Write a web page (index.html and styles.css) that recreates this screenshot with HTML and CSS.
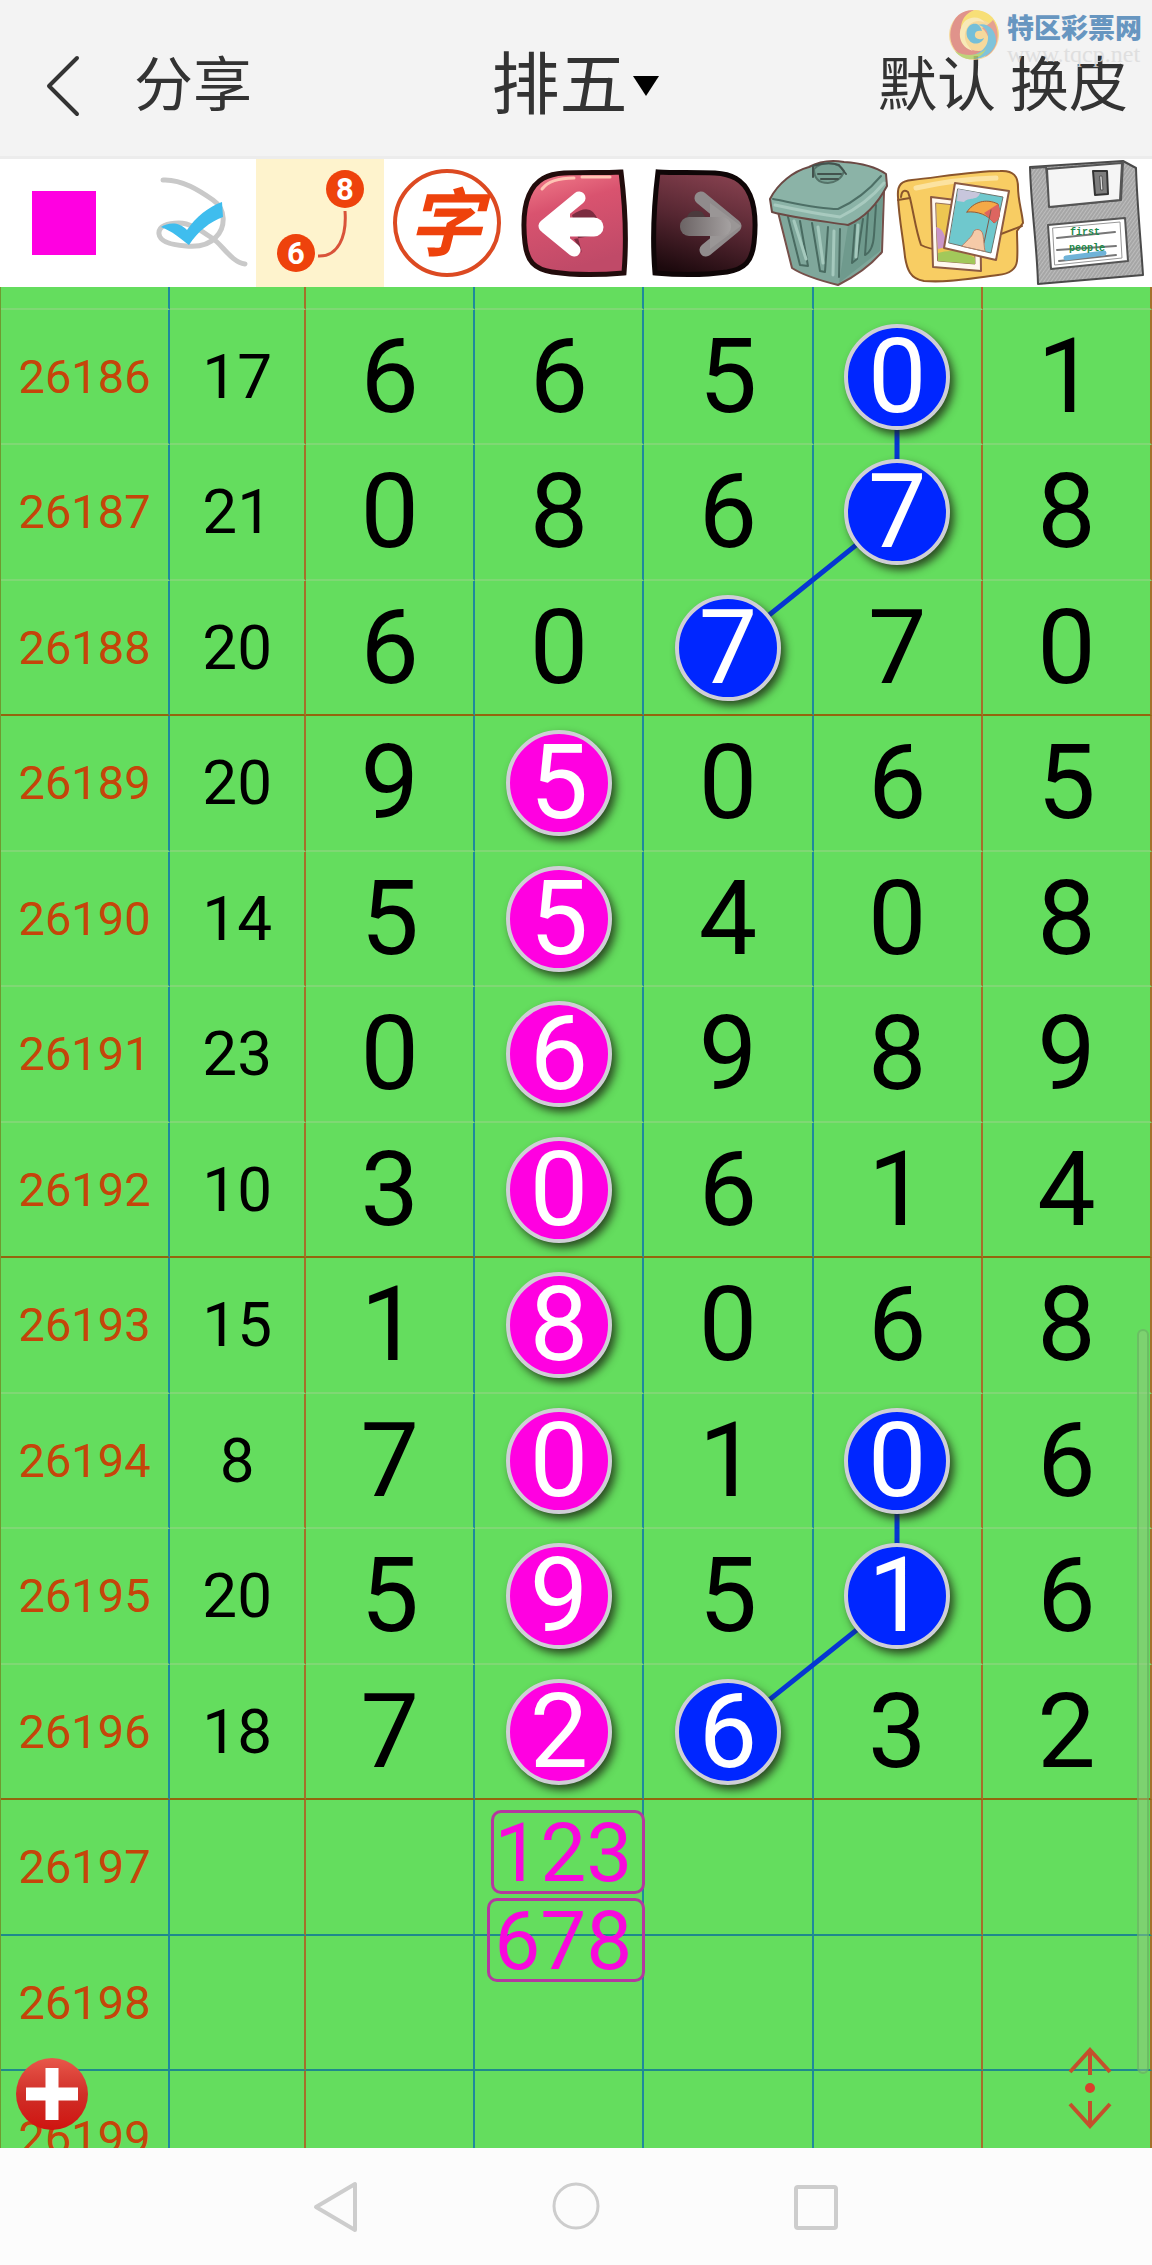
FILE: index.html
```html
<!DOCTYPE html>
<html lang="zh-CN">
<head>
    <meta charset="UTF-8">
    <meta name="viewport" content="width=device-width, initial-scale=1.0">
    <title>排五</title>
    <link rel="stylesheet" href="styles.css">
</head>
<body>
    <header class="topbar">
        <div class="topbar-left">
            <button type="button" class="back" aria-label="返回">
                <svg width="34" height="62" viewBox="0 0 34 62"><path d="M31 3 L3 31 L31 59" fill="none" stroke="#333" stroke-width="4" stroke-linecap="round" stroke-linejoin="round"/></svg>
            </button>
            <button type="button" class="text-btn">分享</button>
        </div>
        <div class="game">
            <select class="game-select" aria-label="彩种">
                <option>排五</option>
            </select>
            <svg width="26" height="20" viewBox="0 0 26 20"><path d="M0 0 H26 L13 20 Z" fill="#000"/></svg>
        </div>
        <div class="topbar-right">
            <button type="button" class="text-btn">默认</button>
            <button type="button" class="text-btn">换皮</button>
        </div>

        <!-- Site logo -->
        <div class="site-mark">
            <svg width="54" height="54" viewBox="0 0 54 54">
                <circle cx="27" cy="27" r="25" fill="#f6d58e"/>
                <path d="M8 11 C0 24 2 40 15 48 C24 50 34 48 38 42 C24 46 10 36 14 20 C15 12 22 5 27 2 C19 2 12 5 8 11Z" fill="#dd8379"/>
                <path d="M28 2 C44 2 54 16 51 31 C49 19 40 10 28 11 C19 12 14 20 16 28 C11 16 17 5 28 2Z" fill="#f8dc62"/>
                <path d="M46 12 C54 24 52 42 38 49 C45 38 43 27 35 20 C40 17 44 15 46 12Z" fill="#e29383"/>
                <path d="M49 35 C45 48 30 55 15 48 C31 49 42 40 41 28 C41 23 37 18 31 17 C40 14 50 22 49 35Z" fill="#6bbbd6"/>
                <path d="M8 43 C18 49 32 48 39 41 C34 52 18 56 8 43Z" fill="#b5cf67"/>
                <path d="M30 16 C20 14 17 26 22 32 C26 38 35 36 37 30 C32 33 27 30 28 26 C28 23 32 22 35 23 C34 19 32 17 30 16Z" fill="#5fb7d4"/>
                <path d="M18 13 C9 24 12 39 26 43 C17 36 15 25 22 17 C27 12 34 12 38 15 C33 8 24 8 18 13Z" fill="#fae8ad"/>
            </svg>
            <div class="site-name">
                <strong>特区彩票网</strong>
                <span>www.tqcp.net</span>
            </div>
        </div>
    </header>

    <!-- Drawing tools -->
    <div class="tools">
        <button type="button" class="tool" aria-label="颜色">
            <svg viewBox="0 0 128 128"><rect x="32" y="32" width="64" height="64" fill="#ff00e1"/></svg>
        </button>
        <button type="button" class="tool" aria-label="画线">
            <svg viewBox="0 0 128 128">
                <path d="M35 21 C54 20 72 32 85 41 C98 50 98 68 88 78 C80 87 68 88 58 87 C44 86 32 83 31 75 C30 67 40 64 51 64 C64 64 76 74 84 79 C94 85 103 103 117 105" fill="none" stroke="#c9c9c9" stroke-width="5" stroke-linecap="round"/>
                <path d="M33 68 C40 64 50 62 59 71 C68 58 80 48 94 43 L95 58 C82 63 70 72 61 86 C53 80 44 72 33 68Z" fill="#3fbdee"/>
            </svg>
        </button>
        <button type="button" class="tool active" aria-label="连线">
            <svg viewBox="0 0 128 128">
                <path d="M89 52 C91 78 82 98 62 97" fill="none" stroke="#d9533a" stroke-width="3"/>
                <circle cx="89" cy="30" r="19" fill="#ee420c"/>
                <circle cx="40" cy="94" r="19" fill="#ee420c"/>
                <text class="tool-num" x="89" y="41">8</text>
                <text class="tool-num" x="40" y="105">6</text>
            </svg>
        </button>
        <button type="button" class="tool" aria-label="文字">
            <svg viewBox="0 0 128 128">
                <circle cx="63" cy="64" r="52" fill="none" stroke="#dc4a22" stroke-width="4"/>
                <text class="tool-char" x="61" y="91">字</text>
            </svg>
        </button>
        <button type="button" class="tool" aria-label="撤销">
            <svg viewBox="0 0 128 128">
                <defs>
                    <linearGradient id="undoFill" x1="0" y1="0" x2="0.3" y2="1">
                        <stop offset="0" stop-color="#f4808d"/>
                        <stop offset="0.4" stop-color="#d9536f"/>
                        <stop offset="1" stop-color="#c04a68"/>
                    </linearGradient>
                </defs>
                <path d="M109 13 C113 45 115 78 112 114 C88 116 60 116 40 113 C22 110 15 102 13 84 C11 66 11 50 17 36 C24 20 36 15 52 14 C72 13 90 14 109 13Z" fill="url(#undoFill)" stroke="#220c0c" stroke-width="5"/>
                <path d="M30 30 C36 22 48 19 62 19 M70 18 H98" fill="none" stroke="#ffc4b4" stroke-width="3" stroke-linecap="round"/>
                <path d="M60 56 Q80 42 86 62 L84 76 L62 80 L70 94" fill="#7c2c40"/>
                <path d="M33 67 L67 39 M34 68 L62 91" fill="none" stroke="#fff" stroke-width="13" stroke-linecap="round"/>
                <path d="M28 67 L58 44 V90Z" fill="#fff"/>
                <path d="M45 68 H82" stroke="#fff" stroke-width="19" stroke-linecap="round"/>
            </svg>
        </button>
        <button type="button" class="tool" aria-label="重做">
            <svg viewBox="0 0 128 128">
                <defs>
                    <linearGradient id="redoFill" x1="0.6" y1="0" x2="0.3" y2="1">
                        <stop offset="0" stop-color="#85404e"/>
                        <stop offset="0.5" stop-color="#552631"/>
                        <stop offset="1" stop-color="#1c090d"/>
                    </linearGradient>
                    <linearGradient id="redoArrow" x1="0" y1="0" x2="1" y2="0">
                        <stop offset="0" stop-color="#6b6364"/>
                        <stop offset="1" stop-color="#a5a1a1"/>
                    </linearGradient>
                </defs>
                <path d="M18 13 C14 45 12 78 15 114 C38 116 66 116 87 113 C105 110 112 102 114 84 C116 66 116 50 110 36 C103 20 91 15 75 14 C55 13 36 14 18 13Z" fill="url(#redoFill)" stroke="#0f0607" stroke-width="5"/>
                <path d="M46 62 Q48 48 62 53 L68 62Z" fill="#4b3a3d"/>
                <path d="M95 67 L61 39 M94 68 L66 91" fill="none" stroke="#908b8c" stroke-width="13" stroke-linecap="round"/>
                <path d="M101 67 L70 44 V90Z" fill="#9a9696"/>
                <rect x="40" y="58" width="51" height="19" rx="9" fill="url(#redoArrow)"/>
            </svg>
        </button>
        <button type="button" class="tool" aria-label="清空">
            <svg viewBox="0 0 128 128" stroke-linejoin="round" stroke-linecap="round">
                <path d="M10 53 L24 109 C36 117 54 122 70 126 C86 118 103 106 114 93 L116 33Z" fill="#7fa79b" stroke="#76504a" stroke-width="2"/>
                <path d="M80 66 L71 124 L112 92 L115 36Z" fill="#6f9a8d"/>
                <path d="M20 58 L32 106 L40 107 L32 62 M44 64 L52 112 L57 113 L60 68 M87 66 L84 104 L89 100 L95 60 M100 54 L97 96 Q105 92 106 76 L108 46 M72 70 L71 118" fill="none" stroke="#496b61" stroke-width="2"/>
                <path d="M26 62 L38 100 M50 68 L55 104 M66 72 L65 116 M90 66 L88 98" fill="none" stroke="#a5c9bd" stroke-width="3"/>
                <path d="M2 40 C10 24 26 12 41 8 C52 2 64 1 76 3 C92 4 108 8 118 15 L119 27 C110 44 98 58 80 66 C54 62 26 59 4 53Z" fill="#8bb3a7" stroke="#6b4944" stroke-width="2"/>
                <path d="M5 40 C26 44 50 50 70 50 C88 42 102 30 113 17" fill="none" stroke="#4d6f66" stroke-width="2"/>
                <path d="M7 46 C30 51 50 55 72 58 C92 48 106 36 116 24" fill="none" stroke="#a8cabf" stroke-width="3"/>
                <path d="M46 10 C54 2 70 2 76 12 C74 20 66 24 60 24 C52 24 46 20 46 10Z" fill="#79a295" stroke="#557369" stroke-width="2"/>
                <path d="M45 18 V7 Q60 2 71 6 L78 15 M50 15 H73 M53 20 H70" fill="none" stroke="#43524d" stroke-width="2"/>
            </svg>
        </button>
        <button type="button" class="tool" aria-label="相册">
            <svg viewBox="0 0 128 128" stroke-linejoin="round" stroke-linecap="round">
                <path d="M2 38 C1 25 6 22 16 21 C44 18 78 12 104 12 C118 11 122 18 122 28 C122 42 126 52 127 64 L121 72 C121 82 122 92 121 102 C120 111 112 115 102 116 C76 119 52 124 28 122 C14 120 11 110 9 98 C7 78 3 60 2 38Z" fill="#f8cd63" stroke="#8a552c" stroke-width="2"/>
                <path d="M2 41 L14 39 C18 56 20 72 25 86 Q32 90 46 91" fill="none" stroke="#8a552c" stroke-width="2"/>
                <path d="M5 38 Q6 29 12 33 L14 39 M105 75 L126 67" fill="none" stroke="#8a552c" stroke-width="2"/>
                <path d="M20 29 Q60 20 100 19" fill="none" stroke="#fce3a0" stroke-width="5"/>
                <path d="M35 38 L84 44 L85 112 L37 108Z" fill="#fff8ee" stroke="#8d5b43" stroke-width="2"/>
                <path d="M40 44 L78 48 L79 105 L42 102Z" fill="#edc651" stroke="#96705a" stroke-width="1"/>
                <path d="M40 68 Q50 70 50 88 L42 90Z" fill="#c995c8"/>
                <path d="M42 94 Q60 88 79 99 L79 105 L42 102Z" fill="#a2c85a"/>
                <path d="M59 24 L113 32 L100 101 L48 89Z" fill="#fff" stroke="#8d5b43" stroke-width="2"/>
                <path d="M62 30 L107 38 L95 94 L53 84Z" fill="#6fc8cd" stroke="#6d746d" stroke-width="1"/>
                <path d="M62 30 L84 34 C82 42 72 38 68 43 L61 42Z" fill="#c8c6dc"/>
                <path d="M71 53 C77 43 90 39 102 45 C104 52 105 60 98 64 C92 56 82 52 71 53Z" fill="#f5a947" stroke="#9c5a31" stroke-width="1"/>
                <path d="M88 54 L102 45 C105 53 105 60 98 64Z" fill="#dd6560"/>
                <path d="M95 51 L88 84" stroke="#7c5a4c" stroke-width="1"/>
                <path d="M66 87 C70 82 76 78 77 74 C78 69 86 69 87 76 C88 82 88 88 89 92Z" fill="#f6caa8" stroke="#b78369" stroke-width="1"/>
            </svg>
        </button>
        <button type="button" class="tool" aria-label="保存">
            <svg viewBox="0 0 128 128" stroke-linejoin="round" stroke-linecap="round">
                <defs>
                    <pattern id="hatch" width="6" height="6" patternUnits="userSpaceOnUse" patternTransform="rotate(35)">
                        <rect width="6" height="6" fill="#bdbdbd"/>
                        <path d="M1 0 V6 M4 0 V6" stroke="#8f8f8f" stroke-width="1"/>
                    </pattern>
                </defs>
                <path d="M6 8 L99 2 L112 9 C113 44 117 84 119 116 L14 125 C13 86 7 48 6 8Z" fill="url(#hatch)" stroke="#4a4a4a" stroke-width="2"/>
                <path d="M8 9 L22 8 L26 48 L97 41 L99 3" fill="none" stroke="#555" stroke-width="2"/>
                <path d="M23 10 L98 4 L96 41 L25 48Z" fill="#f5f5f5" stroke="#555" stroke-width="2"/>
                <path d="M69 12 L83 12 L84 35 L71 36Z" fill="#7d7d7d" stroke="#333" stroke-width="2"/>
                <path d="M76 17 L78 17 L79 31 L77 31Z" fill="#ddd" stroke="#555" stroke-width="1"/>
                <path d="M24 66 L101 59 L104 102 L27 110Z" fill="#fff" stroke="#555" stroke-width="2"/>
                <path d="M29 69 L96 63 L98 99 L31 106Z" fill="none" stroke="#999" stroke-width="1"/>
                <path d="M33 79 L91 73 M33 91 L92 87 M35 102 L92 96" stroke="#777" stroke-width="2"/>
                <path d="M42 99 L80 94" stroke="#6fb3d8" stroke-width="5"/>
                <text class="tool-label" x="46" y="76">first</text>
                <text class="tool-label" x="45" y="92">people</text>
            </svg>
        </button>
    </div>

    <!-- Trend board -->
    <main class="board">
        <div class="sheet">
            <table>
                <colgroup>
                    <col>
                    <col class="col-sum">
                    <col span="5">
                </colgroup>
                <tbody>
                    <tr class="cut"><td></td><td></td><td></td><td></td><td></td><td></td><td></td></tr>
                    <tr><th scope="row">26186</th><td class="sum">17</td><td>6</td><td>6</td><td>5</td><td><span class="ball blue">0</span></td><td>1</td></tr>
                    <tr><th scope="row">26187</th><td class="sum">21</td><td>0</td><td>8</td><td>6</td><td><span class="ball blue">7</span></td><td>8</td></tr>
                    <tr class="mark"><th scope="row">26188</th><td class="sum">20</td><td>6</td><td>0</td><td><span class="ball blue">7</span></td><td>7</td><td>0</td></tr>
                    <tr><th scope="row">26189</th><td class="sum">20</td><td>9</td><td><span class="ball pink">5</span></td><td>0</td><td>6</td><td>5</td></tr>
                    <tr><th scope="row">26190</th><td class="sum">14</td><td>5</td><td><span class="ball pink">5</span></td><td>4</td><td>0</td><td>8</td></tr>
                    <tr><th scope="row">26191</th><td class="sum">23</td><td>0</td><td><span class="ball pink">6</span></td><td>9</td><td>8</td><td>9</td></tr>
                    <tr class="mark"><th scope="row">26192</th><td class="sum">10</td><td>3</td><td><span class="ball pink">0</span></td><td>6</td><td>1</td><td>4</td></tr>
                    <tr><th scope="row">26193</th><td class="sum">15</td><td>1</td><td><span class="ball pink">8</span></td><td>0</td><td>6</td><td>8</td></tr>
                    <tr><th scope="row">26194</th><td class="sum">8</td><td>7</td><td><span class="ball pink">0</span></td><td>1</td><td><span class="ball blue">0</span></td><td>6</td></tr>
                    <tr><th scope="row">26195</th><td class="sum">20</td><td>5</td><td><span class="ball pink">9</span></td><td>5</td><td><span class="ball blue">1</span></td><td>6</td></tr>
                    <tr class="mark"><th scope="row">26196</th><td class="sum">18</td><td>7</td><td><span class="ball pink">2</span></td><td><span class="ball blue">6</span></td><td>3</td><td>2</td></tr>
                    <tr class="next">
                        <th scope="row">26197</th><td></td><td></td>
                        <td class="pick-cell">
                            <div class="picks">
                                <span class="pick">123</span>
                                <span class="pick wide">678</span>
                            </div>
                        </td>
                        <td></td><td></td><td></td>
                    </tr>
                    <tr class="next"><th scope="row">26198</th><td></td><td></td><td></td><td></td><td></td><td></td></tr>
                    <tr class="next"><th scope="row">26199</th><td></td><td></td><td></td><td></td><td></td><td></td></tr>
                </tbody>
            </table>
            <!-- Lines between the blue balls -->
            <svg class="links" viewBox="0 0 1152 1919" preserveAspectRatio="none">
                <path d="M897 90 V225 L728 361"/>
                <path d="M897 1174 V1310 L728 1445"/>
            </svg>
        </div>

        <div class="scroll-thumb"></div>
        <button type="button" class="add" aria-label="添加">
            <svg width="72" height="80" viewBox="0 0 72 80">
                <defs>
                    <linearGradient id="addFill" x1="0" y1="0" x2="0" y2="1">
                        <stop offset="0" stop-color="#e8574a"/>
                        <stop offset="0.5" stop-color="#d02f28"/>
                        <stop offset="1" stop-color="#cf1410"/>
                    </linearGradient>
                </defs>
                <circle cx="36" cy="40" r="36" fill="url(#addFill)"/>
                <path d="M36 14 V66 M10 40 H62" stroke="#fff" stroke-width="13"/>
            </svg>
        </button>
        <button type="button" class="jump" aria-label="滚动">
            <svg width="44" height="84" viewBox="0 0 44 84">
                <path d="M2 26 L22 4 L42 26 M22 4 V29 M2 58 L22 80 L42 58 M22 80 V55" fill="none" stroke="#c4502c" stroke-width="4"/>
                <circle cx="22" cy="42" r="5" fill="#d8402c"/>
            </svg>
        </button>
    </main>

    <nav class="navbar">
        <button type="button" aria-label="返回">
            <svg width="48" height="56" viewBox="0 0 48 56"><path d="M43 5 V51 L4 28 Z" fill="none" stroke="#cdcdcd" stroke-width="4" stroke-linejoin="round"/></svg>
        </button>
        <button type="button" aria-label="主页">
            <svg width="48" height="56" viewBox="0 0 48 56"><circle cx="24" cy="27" r="22" fill="none" stroke="#cdcdcd" stroke-width="3"/></svg>
        </button>
        <button type="button" aria-label="任务">
            <svg width="48" height="56" viewBox="0 0 48 56"><rect x="4" y="8" width="40" height="41" rx="2" fill="none" stroke="#cdcdcd" stroke-width="4"/></svg>
        </button>
    </nav>
</body>
</html>
```
FILE: styles.css
```css
* {
    box-sizing: border-box;
}
body {
    margin: 0;
    height: 100vh;
    display: flex;
    flex-direction: column;
    overflow: hidden;
    background: #fcfcfc;
    font-family: Roboto, "Noto Sans CJK SC", sans-serif;
}
button {
    padding: 0;
    border: none;
    background: none;
    font-family: inherit;
    cursor: pointer;
}
svg {
    display: block;
}

/* Header */
.topbar {
    position: relative;
    display: grid;
    grid-template-columns: 1fr auto 1fr;
    align-items: center;
    flex: none;
    height: 159px;
    padding: 16px 24px 0 46px;
    background: #f3f3f3;
    border-bottom: 3px solid #ececec;
}
.topbar-left,
.topbar-right {
    display: flex;
    align-items: center;
}
.topbar-left {
    gap: 54px;
}
.topbar-right {
    justify-content: flex-end;
    gap: 14px;
}
.text-btn {
    font-size: 59px;
    line-height: 72px;
    color: #333;
}
.game {
    display: flex;
    align-items: center;
    gap: 4px;
    margin-right: 24px;
}
.game-select {
    appearance: none;
    padding: 0;
    border: none;
    background: none;
    font-family: inherit;
    font-size: 68px;
    font-weight: 400;
    line-height: 80px;
    color: #333;
}
.site-mark {
    position: absolute;
    top: 8px;
    right: 10px;
    display: flex;
    gap: 6px;
    opacity: 0.85;
}
.site-name {
    display: flex;
    flex-direction: column;
}
.site-name strong {
    font-size: 27px;
    font-weight: 900;
    line-height: 32px;
    margin-top: 5px;
    color: #4f86b8;
}
.site-name span {
    font-family: "Liberation Serif", serif;
    font-size: 24px;
    line-height: 18px;
    color: #dcdcdc;
}

/* Tools */
.tools {
    display: grid;
    grid-template-columns: repeat(9, 1fr);
    flex: none;
    background: #fff;
}
.tool.active {
    background: #fef3cd;
}
.tool svg {
    width: 100%;
}
.tool-num {
    font-size: 31px;
    font-weight: 700;
    fill: #fff;
    text-anchor: middle;
}
.tool-char {
    font-size: 74px;
    font-weight: 700;
    font-style: italic;
    fill: #ee420c;
    text-anchor: middle;
}
.tool-label {
    font-family: "Liberation Mono", monospace;
    font-size: 10px;
    font-weight: 700;
    fill: #1f8a4c;
}

/* Board */
.board {
    position: relative;
    flex: 1;
    min-height: 0;
    overflow: hidden;
    background: #64dd5e;
}
.sheet {
    position: relative;
}
table {
    width: 100%;
    table-layout: fixed;
    border-collapse: separate;
    border-spacing: 0;
    border-left: 1px solid #6f9a30;
}
.col-sum {
    width: 136px;
}
tr {
    height: 135px;
}
tr:nth-child(odd) {
    height: 136px;
}
tr.cut {
    height: 23px;
}
th,
td {
    padding: 0;
    border-right: 2px solid #1f8a9c;
    border-bottom: 2px solid #7fd874;
    text-align: center;
    vertical-align: middle;
    font-size: 104px;
    font-weight: 450;
    line-height: 104px;
    color: #000;
}
th {
    font-size: 47px;
    color: #c5450a;
}
td:nth-child(2),
td:nth-child(6),
td:nth-child(7) {
    border-right-color: #a4702a;
}
td.sum {
    font-size: 62px;
}
.mark th,
.mark td {
    border-bottom-color: #94650e;
}
.next th,
.next td {
    border-bottom-color: #1f8a8c;
}
.ball {
    position: relative;
    z-index: 2;
    display: block;
    width: 106px;
    height: 106px;
    margin: 0 auto;
    border: 4px solid #cfcfd6;
    border-radius: 50%;
    box-shadow: 4px 5px 9px rgba(30, 40, 20, 0.8);
    line-height: 98px;
    color: #fff;
}
.blue {
    background: #0026ff;
}
.pink {
    background: #ff00e1;
}
.links {
    position: absolute;
    top: 0;
    left: 0;
    z-index: 1;
    width: 100%;
    height: 100%;
    fill: none;
    stroke: #0636d2;
    stroke-width: 5;
}

/* Picked numbers on the next draw */
.pick-cell {
    position: relative;
}
.picks {
    position: absolute;
    top: 10px;
    right: -3px;
    z-index: 3;
    display: flex;
    flex-direction: column;
    align-items: flex-end;
    gap: 4px;
}
.pick {
    height: 84px;
    padding-right: 10px;
    border: 3px solid #b5389f;
    border-radius: 10px;
    font-size: 82px;
    line-height: 80px;
    color: #f808dc;
}
.pick.wide {
    padding-left: 4px;
}

.scroll-thumb {
    position: absolute;
    top: 56%;
    right: 3px;
    width: 12px;
    height: 40%;
    border: 2px solid rgba(90, 170, 90, 0.5);
    border-radius: 6px;
    background: rgba(150, 200, 130, 0.5);
}
.add {
    position: absolute;
    bottom: 14px;
    left: 16px;
    z-index: 4;
}
.jump {
    position: absolute;
    bottom: 18px;
    right: 40px;
    z-index: 4;
}

/* System navigation */
.navbar {
    display: flex;
    justify-content: center;
    align-items: center;
    gap: 192px;
    flex: none;
    height: 117px;
    background: #fcfcfc;
}
```
